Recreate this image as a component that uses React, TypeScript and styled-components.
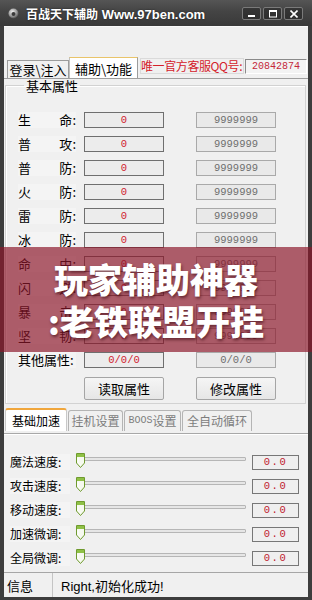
import React from 'react';
import styled, { createGlobalStyle } from 'styled-components';

const GlobalStyle = createGlobalStyle`
  html, body { margin: 0; padding: 0; background: #3c3c3c; }
  body { font-family: "Liberation Sans", "Noto Sans CJK SC", sans-serif; }
  * { box-sizing: border-box; }
`;

const attrs = [
  ['生', '命'],
  ['普', '攻'],
  ['普', '防'],
  ['火', '防'],
  ['雷', '防'],
  ['冰', '防'],
  ['命', '中'],
  ['闪', '避'],
  ['暴', '击'],
  ['坚', '韧'],
];

const speeds = ['魔法速度', '攻击速度', '移动速度', '加速微调', '全局微调'];

const bottomTabs = [
  { name: '基础加速', width: 62, active: true },
  { name: '挂机设置', width: 55, active: false },
  { name: '设置', prefix: 'BOOS', width: 57, active: false },
  { name: '全自动循环', width: 70, active: false },
];

function Thumb() {
  return (
    <svg width="9" height="15" viewBox="0 0 9 15">
      <path d="M0.5 0.5 H8.5 V10 L4.5 14.5 L0.5 10 Z" fill="#f6f9ef" stroke="#6f9a2e" />
      <rect x="1" y="1" width="7" height="3" fill="#8fc146" />
      <path d="M2 5 V9.5 L4.5 12.3" fill="none" stroke="#ffffff" strokeWidth="1" />
    </svg>
  );
}

function App() {
  return (
    <>
      <GlobalStyle />
      <Window>
        <TitleBar>
          <svg width="11" height="11" viewBox="0 0 11 11">
            <defs>
              <radialGradient id="ball" cx="0.4" cy="0.35" r="0.7">
                <stop offset="0" stopColor="#f2f2f2" />
                <stop offset="0.6" stopColor="#9a9a9a" />
                <stop offset="1" stopColor="#444" />
              </radialGradient>
            </defs>
            <circle cx="5.5" cy="5.5" r="5" fill="url(#ball)" />
            <circle cx="5.5" cy="6" r="2" fill="#3a3a3a" />
          </svg>
          <TitleText>
            <TitleCjk>百战天下辅助</TitleCjk> Www.97ben.com
          </TitleText>
          <TitleButtons>
            <CapButton>
              <svg width="8" height="8" viewBox="0 0 8 8">
                <rect x="0" y="5" width="7" height="2" fill="#fff" />
              </svg>
            </CapButton>
            <CapButton>
              <svg width="8" height="8" viewBox="0 0 8 8">
                <rect x="0.5" y="0.5" width="7" height="6.5" fill="none" stroke="#fff" />
                <rect x="0.5" y="0.5" width="7" height="1.5" fill="#fff" />
              </svg>
            </CapButton>
            <CapButton>
              <svg width="8" height="8" viewBox="0 0 8 8">
                <path d="M0.5 0.5 L7.5 7.5 M7.5 0.5 L0.5 7.5" stroke="#fff" strokeWidth="1.6" />
              </svg>
            </CapButton>
          </TitleButtons>
        </TitleBar>

        <Client>
          <TopGap />
          <TabStrip>
            <TopTab $width={62}>登录\注入</TopTab>
            <TopTab $width={69} $active>
              辅助\功能
            </TopTab>
            <QQLabel>唯一官方客服QQ号:</QQLabel>
            <QQBox>20842874</QQBox>
          </TabStrip>

          <Panel>
            <Group>
              <Legend>基本属性</Legend>
              {attrs.map(([a, b], i) => (
                <AttrRow key={i}>
                  <AttrLabel>
                    <span>{a}</span>
                    <span>{b}:</span>
                  </AttrLabel>
                  <ValueBox>0</ValueBox>
                  <ValueBox $max>9999999</ValueBox>
                </AttrRow>
              ))}
              <AttrRow>
                <AttrLabel>其他属性:</AttrLabel>
                <ValueBox>0/0/0</ValueBox>
                <ValueBox $max>0/0/0</ValueBox>
              </AttrRow>
              <ButtonRow>
                <WinButton>读取属性</WinButton>
                <WinButton>修改属性</WinButton>
              </ButtonRow>
            </Group>
          </Panel>

          <BottomTabs>
            {bottomTabs.map((t) => (
              <BottomTab key={t.name} $width={t.width} $active={t.active}>
                {t.prefix && <TabMono>{t.prefix}</TabMono>}
                {t.name}
              </BottomTab>
            ))}
          </BottomTabs>

          <SpeedPanel>
            {speeds.map((s) => (
              <SpeedRow key={s}>
                <SpeedLabel>{s}:</SpeedLabel>
                <Slider>
                  <Track />
                  <ThumbWrap>
                    <Thumb />
                  </ThumbWrap>
                </Slider>
                <SpeedValue>0.0</SpeedValue>
              </SpeedRow>
            ))}
          </SpeedPanel>

          <StatusBar>
            <StatusName>信息</StatusName>
            <StatusText>Right,初始化成功!</StatusText>
          </StatusBar>
        </Client>

        <Banner>
          <BannerLine>玩家辅助神器</BannerLine>
          <BannerLine>:老铁联盟开挂</BannerLine>
        </Banner>
      </Window>
    </>
  );
}

export default App;

const Window = styled.div`
  position: relative;
  width: 312px;
  height: 600px;
  display: flex;
  flex-direction: column;
  padding: 0 4px 3px;
  background: #3d3d3d;
  overflow: hidden;
`;

const TitleBar = styled.div`
  height: 26px;
  margin: 0 -4px;
  padding: 0 9px 0 8px;
  display: flex;
  align-items: center;
  background: linear-gradient(#555555, #444444 45%, #393939);
`;

const TitleText = styled.div`
  margin-left: 7px;
  color: #ffffff;
  font-size: 13px;
  font-weight: bold;
  white-space: nowrap;
  text-shadow: 0 0 2px rgba(0, 0, 0, 0.6);
`;

const TitleCjk = styled.span`
  font-family: "Noto Sans CJK SC", sans-serif;
  font-size: 12px;
`;

const TitleButtons = styled.div`
  margin-left: auto;
  display: flex;
  gap: 2px;
  margin-top: 1px;
`;

const CapButton = styled.div`
  width: 19px;
  height: 13px;
  display: flex;
  align-items: center;
  justify-content: center;
  border: 1px solid #7a7a7a;
  border-radius: 2px;
  background: rgba(0, 0, 0, 0.25);
`;

const Client = styled.div`
  flex: 1;
  display: flex;
  flex-direction: column;
  background: #f0f0f0;
  font-family: "Noto Sans CJK SC", "Liberation Sans", sans-serif;
  color: #000;
`;

const TopGap = styled.div`
  height: 30px;
  border-top: 1px solid #fafafa;
`;

const TabStrip = styled.div`
  height: 22px;
  display: flex;
  align-items: flex-end;
  padding-left: 3px;
`;

const TopTab = styled.div<{ $width: number; $active?: boolean }>`
  width: ${(p) => p.$width}px;
  height: ${(p) => (p.$active ? 21 : 18)}px;
  display: flex;
  align-items: center;
  justify-content: center;
  font-size: 13px;
  line-height: 1;
  background: ${(p) => (p.$active ? '#ffffff' : '#f0f0f0')};
  border: 1px solid #9c9c9c;
  border-bottom: none;
  border-top-color: ${(p) => (p.$active ? '#e9c46a' : '#9c9c9c')};
  border-left-color: ${(p) => (p.$active ? '#c0c0c0' : '#9c9c9c')};
`;

const QQLabel = styled.div`
  align-self: flex-start;
  margin: 2px 0 0 2px;
  width: 104px;
  height: 16px;
  border: 1px solid #dadada;
  color: #d42029;
  font-size: 12px;
  letter-spacing: -0.4px;
  line-height: 14px;
  white-space: nowrap;
`;

const QQBox = styled.div`
  align-self: flex-start;
  margin: 3px 0 0 1px;
  width: 62px;
  height: 15px;
  border: 1px solid;
  border-color: #8a8a8a #ffffff #ffffff #8a8a8a;
  background: #f3f3f3;
  color: #c4283a;
  font-family: "Liberation Mono", monospace;
  font-size: 10px;
  line-height: 13px;
  text-align: center;
`;

const Panel = styled.div`
  border-top: 1px solid #9f9f9f;
  padding: 0 2px 4px 1px;
`;

const Group = styled.fieldset`
  margin: 0;
  padding: 16px 0 3px 12px;
  border: 1px solid #d2d2d2;
  box-shadow: inset 1px 1px 0 #ffffff;
`;

const Legend = styled.legend`
  margin-left: 6px;
  padding: 0 2px;
  font-size: 13px;
  line-height: 13px;
`;

const AttrRow = styled.div`
  height: 24px;
  display: flex;
  align-items: center;
`;

const AttrLabel = styled.div`
  width: 58px;
  margin-right: 8px;
  display: flex;
  justify-content: space-between;
  font-size: 13px;
  line-height: 16px;
  background: #f4f4f4;
  white-space: nowrap;
`;

const ValueBox = styled.div<{ $max?: boolean }>`
  width: 80px;
  height: 16px;
  margin-left: ${(p) => (p.$max ? 32 : 0)}px;
  border: 1px solid ${(p) => (p.$max ? '#a9a9a9' : '#6f6f6f')};
  background: ${(p) => (p.$max ? '#e9e9e9' : '#ececec')};
  color: ${(p) => (p.$max ? '#6e6e6e' : '#d0202e')};
  font-family: "Liberation Mono", monospace;
  font-size: 10.5px;
  line-height: 14px;
  text-align: center;
`;

const ButtonRow = styled.div`
  display: flex;
  gap: 32px;
  margin-top: 5px;
  padding-left: 66px;
`;

const WinButton = styled.div`
  width: 80px;
  height: 23px;
  display: flex;
  align-items: center;
  justify-content: center;
  border: 1px solid #a5a5a5;
  border-radius: 2px;
  background: linear-gradient(#f5f5f5, #e6e6e6);
  font-size: 13px;
`;

const BottomTabs = styled.div`
  height: 25px;
  display: flex;
  align-items: flex-end;
  gap: 1px;
  padding: 0 0 2px 1px;
`;

const BottomTab = styled.div<{ $width: number; $active: boolean }>`
  width: ${(p) => p.$width}px;
  height: ${(p) => (p.$active ? 23 : 21)}px;
  display: flex;
  align-items: center;
  justify-content: center;
  font-size: 12px;
  line-height: 1;
  white-space: nowrap;
  color: ${(p) => (p.$active ? '#000000' : '#7d7d7d')};
  background: ${(p) => (p.$active ? '#ffffff' : '#f0f0f0')};
  border: 1px solid ${(p) => (p.$active ? '#c8c8c8' : '#b4b4b4')};
  border-top: ${(p) => (p.$active ? '2px solid #f0a63c' : '1px solid #b4b4b4')};
  border-bottom: none;
  border-radius: 3px 3px 0 0;
`;

const TabMono = styled.span`
  font-family: "Liberation Mono", monospace;
  font-size: 10px;
`;

const SpeedPanel = styled.div`
  flex: 1;
  border-top: 1px solid #a8a8a8;
  box-shadow: inset 0 1px 0 #ffffff;
  padding: 16px 0 0 6px;
`;

const SpeedRow = styled.div`
  height: 24px;
  display: flex;
  align-items: center;
`;

const SpeedLabel = styled.div`
  width: 60px;
  margin-right: 6px;
  font-size: 12px;
  line-height: 16px;
  background: #f4f4f4;
  white-space: nowrap;
`;

const Slider = styled.div`
  position: relative;
  align-self: stretch;
  width: 172px;
`;

const Track = styled.div`
  position: absolute;
  top: 7px;
  left: 4px;
  width: 166px;
  height: 4px;
  border: 1px solid #b6b6b6;
  border-radius: 1px;
  background: #e6e6e6;
`;

const ThumbWrap = styled.div`
  position: absolute;
  top: 3px;
  left: 0;
  line-height: 0;
`;

const SpeedValue = styled.div`
  width: 47px;
  height: 15px;
  margin-left: 4px;
  border: 1px solid #777777;
  background: #efefef;
  color: #c0202e;
  font-family: "Liberation Mono", monospace;
  font-size: 10.5px;
  letter-spacing: 1.5px;
  line-height: 13px;
  text-align: center;
`;

const StatusBar = styled.div`
  height: 25px;
  display: flex;
  align-items: center;
  border-top: 1px solid #a6a6a6;
  font-size: 13px;
`;

const StatusName = styled.div`
  width: 49px;
  height: 100%;
  padding-left: 3px;
  display: flex;
  align-items: center;
  border-right: 1px solid #c4c4c4;
`;

const StatusText = styled.div`
  padding-left: 8px;
  font-family: "Liberation Sans", "Noto Sans CJK SC", sans-serif;
`;

const Banner = styled.div`
  position: absolute;
  top: 247px;
  left: 0;
  width: 312px;
  height: 105px;
  padding-top: 11px;
  display: flex;
  flex-direction: column;
  align-items: center;
  background: rgba(140, 22, 42, 0.68);
`;

const BannerLine = styled.div`
  font-family: "Noto Sans CJK SC", sans-serif;
  font-size: 34px;
  font-weight: 900;
  line-height: 42px;
  color: #ffffff;
  white-space: nowrap;
  text-shadow: 1px 2px 3px rgba(50, 0, 10, 0.55);
`;
